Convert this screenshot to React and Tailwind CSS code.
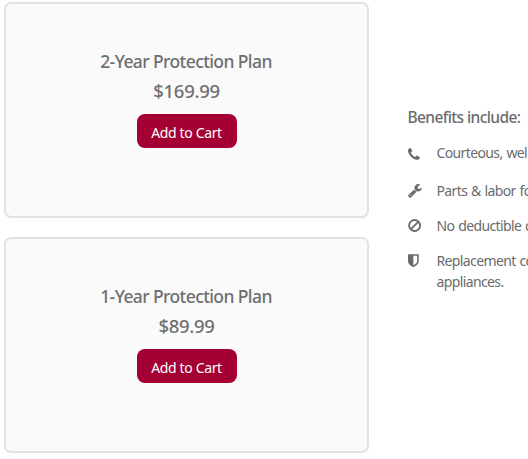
const icon = 'block h-[15px] w-[15px] fill-current overflow-visible';

function PhoneIcon() {
  return (
    <svg className={icon} viewBox="0 0 1792 1792">
      <path d="M1408 1240q0 27-10 70.5t-21 68.500q-21 50-122 106-94 51-186 51-27 0-53-3.500t-57.500-12.500-47-14.500-55.500-20.500-49-18q-98-35-175-83-127-79-264-216t-216-264q-48-77-83-175-3-9-18-49t-20.500-55.500-14.500-47-12.500-57.500-3.500-53q0-92 51-186 56-101 106-122 25-11 68.500-21t70.500-10q14 0 21 3 18 6 53 76 11 19 30 54t35 63.500 31 53.500q3 4 17.500 25t21.500 35.500 7 28.500q0 20-28.500 50t-62 55-62 53-28.500 46q0 9 5 22.500t8.500 20.500 14 24 11.500 19q76 137 174 235t235 174q2 1 19 11.500t24 14 20.500 8.500 22.500 5q18 0 46-28.500t53-62 55-62 50-28.500q14 0 28.500 7t35.500 21.500 25 17.500q25 15 53.500 31t63.500 35 54 30q70 35 76 53 3 7 3 21z" />
    </svg>
  );
}

function WrenchIcon() {
  return (
    <svg className={icon} viewBox="0 0 1792 1792">
      <path d="M384 1472q0-26-19-45t-45-19-45 19-19 45 19 45 45 19 45-19 19-45zm644-420l-682 682q-37 37-90 37-52 0-91-37l-106-108q-38-36-38-90 0-53 38-91l681-681q39 98 114.500 173.500t173.500 114.500zm634-435q0 39-23 106-47 134-164.500 217.500t-258.500 83.500q-185 0-316.500-131.500t-131.500-316.500 131.500-316.500 316.500-131.500q58 0 121.500 16.500t107.500 46.500q16 11 16 28t-16 28l-293 169v224l193 107q5-3 79-48.500t135.500-81 70.500-35.500q15 0 23.500 10t8.500 25z" />
    </svg>
  );
}

function BanIcon() {
  return (
    <svg className="block h-[15px] w-[15px]" viewBox="0 0 15 15" fill="none" stroke="currentColor" strokeWidth="1.9">
      <circle cx="6.600" cy="7.500" r="5.500" />
      <path d="M2.700 11.400 10.500 3.600" />
    </svg>
  );
}

function ShieldIcon() {
  return (
    <svg className={icon} viewBox="0 0 16 16">
      <path fillRule="evenodd" d="M.6 1.2H10.9q.6 0 .6.6V8.500C11.500 12 8 14 5.700 15 3.400 14 0 12 0 8.500V1.800q0-.6.6-.6ZM5.700 2.900V13C7.600 12 9.800 10.700 9.800 8.500V2.900Z" />
    </svg>
  );
}

function Plan({ title, price }) {
  return (
    <section className="flex h-[216px] w-[365px] flex-col items-center rounded-[7px] border-2 border-[#e2e2e2] bg-[#fafafa] pt-[44px] text-[#6f6f6f]">
      <h2 className="-ml-[1px] text-[17.5px] leading-[26px] font-medium tracking-[-0.6px] whitespace-nowrap">{title}</h2>
      <p className="mt-[3px] text-[18.5px] leading-[28px] font-medium tracking-[-0.3px]">{price}</p>
      <button className="mt-[9px] h-[34px] w-[100px] rounded-lg bg-[#a50034] pt-[3px] text-[14px] leading-5 tracking-[-0.35px] whitespace-nowrap text-white">
        Add to Cart
      </button>
    </section>
  );
}

function Benefit({ Icon, className, iconClass, children }) {
  return (
    <li className={'flex items-start ' + className}>
      <span className={'w-[29px] shrink-0 ' + iconClass}><Icon /></span>
      <span className="text-[14px] leading-[21px] tracking-[-0.62px] [word-spacing:0.8px] whitespace-nowrap">{children}</span>
    </li>
  );
}

export default function App() {
  return (
    <main className="flex h-[459px] w-[528px] overflow-hidden bg-white pt-0.5 pl-1 font-['Noto_Sans',sans-serif]">
      <div className="flex shrink-0 flex-col gap-[19px]">
        <Plan title="2-Year Protection Plan" price="$169.99" />
        <Plan title="1-Year Protection Plan" price="$89.99" />
      </div>
      <aside className="ml-[38.5px] shrink-0 pt-[103px] text-[#6b6b6b]">
        <h3 className="text-[15.5px] leading-6 font-medium tracking-[-0.6px] whitespace-nowrap">Benefits include:</h3>
        <ul>
          <Benefit Icon={PhoneIcon} className="mt-[13px]" iconClass="pt-[5px]">Courteous, wel</Benefit>
          <Benefit Icon={WrenchIcon} className="mt-[17px]" iconClass="pt-[3px]">Parts &amp; labor fo</Benefit>
          <Benefit Icon={BanIcon} className="mt-[14px]" iconClass="pt-[3px]">No deductible o</Benefit>
          <Benefit Icon={ShieldIcon} className="mt-[14px]" iconClass="pt-[3px]">Replacement co<br />appliances.</Benefit>
        </ul>
      </aside>
    </main>
  );
}
